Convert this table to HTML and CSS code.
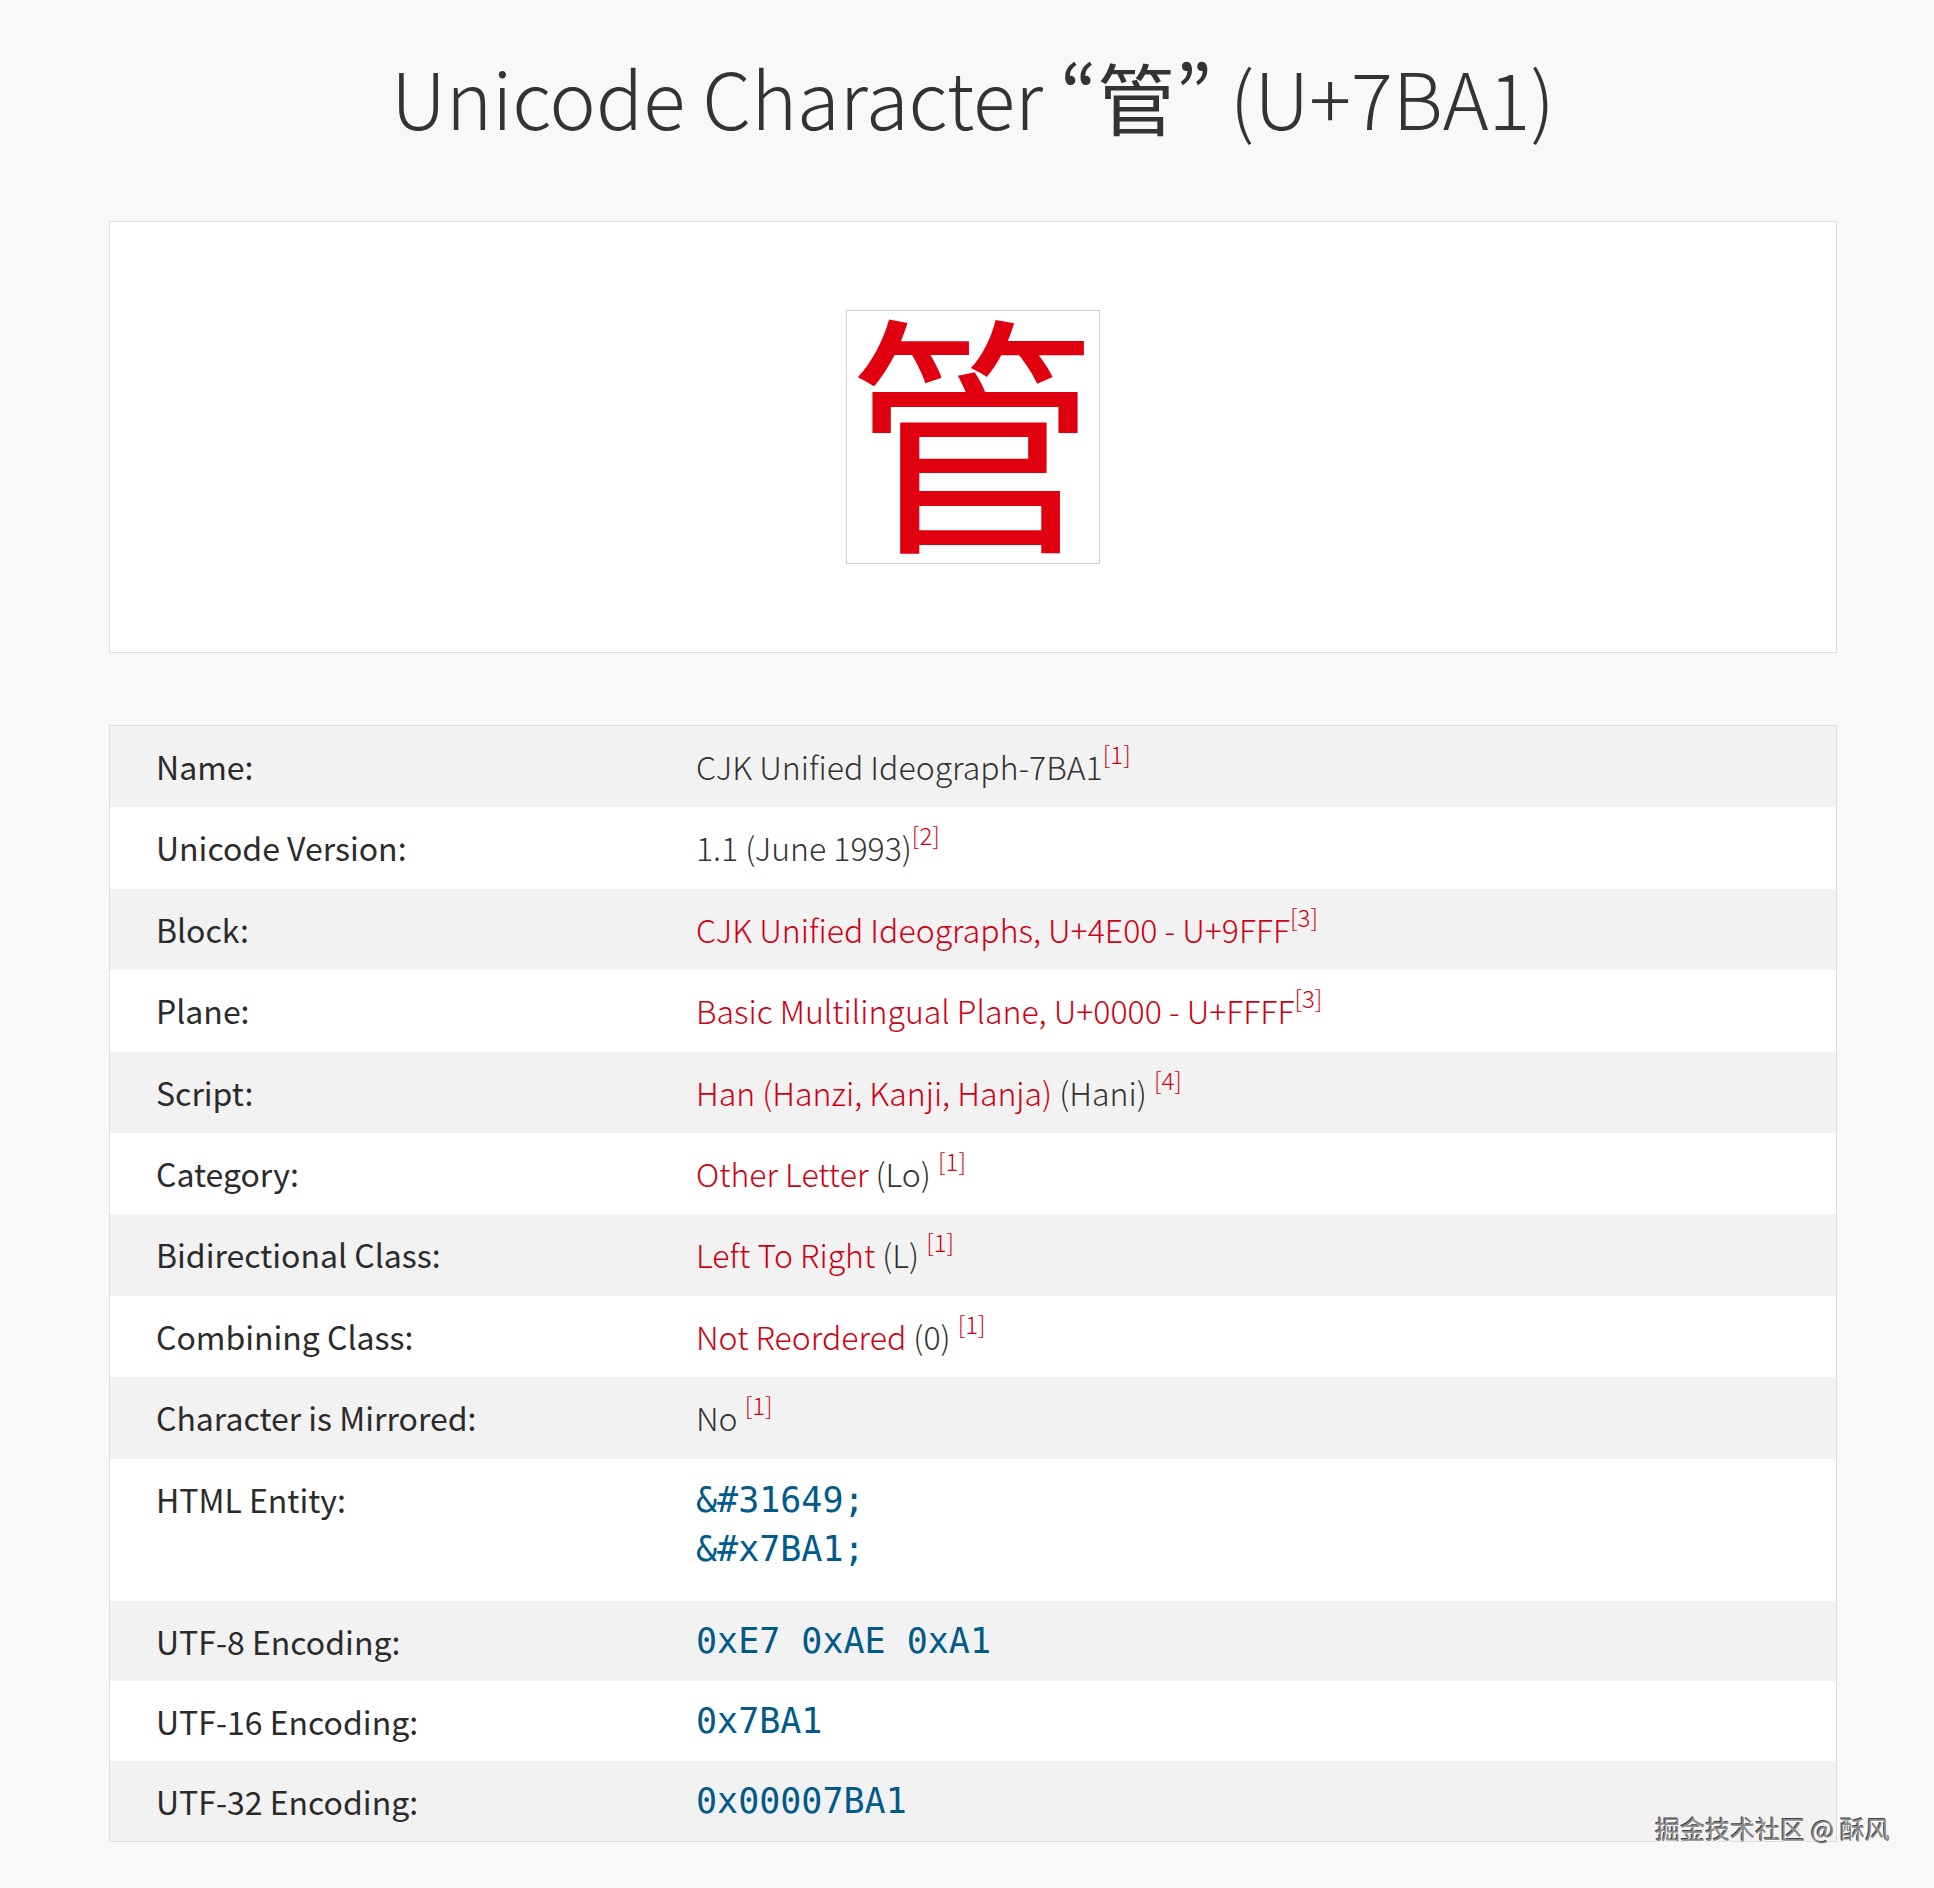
FILE: index.html
```html
<!DOCTYPE html>
<html lang="en">
<head>
<meta charset="utf-8">
<title>Unicode Character “管” (U+7BA1)</title>
<link rel="stylesheet" href="styles.css">
</head>
<body>
<main class="page">
  <h1 class="title">Unicode Character <span class="cjk">“管”</span> (U+7BA1)</h1>

  <section class="preview">
    <div class="glyph-box"><span class="glyph">管</span></div>
  </section>

  <section class="props">
    <div class="row odd"><div class="label">Name:</div><div class="value">CJK Unified Ideograph-7BA1<sup class="ref">[1]</sup></div></div>
    <div class="row"><div class="label">Unicode Version:</div><div class="value">1.1 (June 1993)<sup class="ref">[2]</sup></div></div>
    <div class="row odd"><div class="label">Block:</div><div class="value"><a class="link">CJK Unified Ideographs, U+4E00 - U+9FFF</a><sup class="ref">[3]</sup></div></div>
    <div class="row"><div class="label">Plane:</div><div class="value"><a class="link">Basic Multilingual Plane, U+0000 - U+FFFF</a><sup class="ref">[3]</sup></div></div>
    <div class="row odd"><div class="label">Script:</div><div class="value"><a class="link">Han (Hanzi, Kanji, Hanja)</a> (Hani) <sup class="ref">[4]</sup></div></div>
    <div class="row"><div class="label">Category:</div><div class="value"><a class="link">Other Letter</a> (Lo) <sup class="ref">[1]</sup></div></div>
    <div class="row odd"><div class="label">Bidirectional Class:</div><div class="value"><a class="link">Left To Right</a> (L) <sup class="ref">[1]</sup></div></div>
    <div class="row"><div class="label">Combining Class:</div><div class="value"><a class="link">Not Reordered</a> (0) <sup class="ref">[1]</sup></div></div>
    <div class="row odd"><div class="label">Character is Mirrored:</div><div class="value">No <sup class="ref">[1]</sup></div></div>
    <div class="row tall"><div class="label">HTML Entity:</div><div class="value"><code class="code">&amp;#31649;</code><code class="code">&amp;#x7BA1;</code></div></div>
    <div class="row odd enc"><div class="label">UTF-8 Encoding:</div><div class="value"><code class="code">0xE7 0xAE 0xA1</code></div></div>
    <div class="row enc"><div class="label">UTF-16 Encoding:</div><div class="value"><code class="code">0x7BA1</code></div></div>
    <div class="row odd enc"><div class="label">UTF-32 Encoding:</div><div class="value"><code class="code">0x00007BA1</code></div></div>
  </section>

  <div class="watermark">掘金技术社区 @ 酥风</div>
</main>
</body>
</html>
```

FILE: styles.css
```css
html, body {
  margin: 0;
  padding: 0;
}
body {
  background: #f8f8f8;
  color: #333;
  font-family: "Noto Sans CJK SC", "Noto Sans", sans-serif;
  font-size: 32px;
}
.page {
  position: relative;
  padding: 0 97px 0 109px;
  min-height: 1888px;
  box-sizing: border-box;
}
.title {
  margin: 0;
  padding: 48px 0 76px;
  height: 97px;
  text-align: center;
  font-weight: 300;
  font-size: 78px;
  line-height: 97px;
  color: #333;
}
.cjk {
  font-weight: 400;
  font-feature-settings: "pwid";
}
.preview {
  background: #fff;
  border: 1px solid #dcdcdc;
  height: 432px;
  box-sizing: border-box;
  display: flex;
  align-items: center;
  justify-content: center;
}
.glyph-box {
  width: 254px;
  height: 254px;
  box-sizing: border-box;
  border: 1px solid #cfcfcf;
  padding-bottom: 26px;
  display: flex;
  align-items: center;
  justify-content: center;
}
.glyph {
  color: #e0000f;
  font-size: 252px;
  line-height: 1;
}
.props {
  margin-top: 72px;
  border: 1px solid #dcdcdc;
  background: #fff;
}
.row {
  display: grid;
  grid-template-columns: 586px 1fr;
  background: #fff;
}
.row.odd {
  background: #f2f2f2;
}
.label, .value {
  padding-top: 17px;
  padding-bottom: 17px;
  line-height: 47.4px;
}
.label {
  padding-left: 46px;
  font-weight: 400;
  color: #2b2b2b;
}
.value {
  font-weight: 300;
  color: #333;
}
.tall .value {
  padding-bottom: 27px;
}
.enc .label, .enc .value {
  padding-top: 16px;
  padding-bottom: 16px;
  line-height: 48px;
}
.link {
  color: #cf0014;
  font-weight: 300;
}
.ref {
  color: #cf0014;
  font-size: 24px;
  font-weight: 300;
  vertical-align: 16px;
  line-height: 0;
}
.code {
  display: block;
  font-family: "DejaVu Sans Mono", monospace;
  font-size: 35px;
  line-height: 49px;
  color: #005a8a;
}
.enc .code {
  line-height: 48px;
}
.watermark {
  position: absolute;
  right: 44px;
  top: 1810px;
  font-size: 25px;
  color: #8a8a8a;
  text-shadow: 1px 1px 0 #fff, -1px -1px 0 #444;
  font-weight: 400;
}
```
